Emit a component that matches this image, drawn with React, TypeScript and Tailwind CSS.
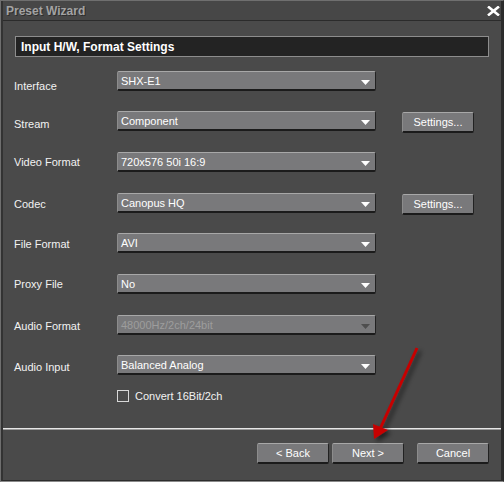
import React from "react";

const font = { fontFamily: '"Liberation Sans", Arial, sans-serif' };

function Caret({ disabled }: { disabled?: boolean }) {
  return (
    <svg width="9" height="5" viewBox="0 0 9 5" className="absolute right-[5px] top-[8px]">
      <polygon points="0,0 9,0 4.5,5" fill={disabled ? "#4e4e4e" : "#ffffff"} />
    </svg>
  );
}

function Dropdown({ value, disabled }: { value: string; disabled?: boolean }) {
  return (
    <div
      className={`relative flex h-[20px] w-[259px] items-center rounded-[2px] border-t border-l border-r border-b-2 border-t-[#a8a8a8] border-l-[#8c8c8c] border-r-[#222] border-b-[#1b1b1b] bg-[#79797b] pl-[3px] text-[11px] leading-none ${
        disabled ? "text-[#9d9d9d]" : "text-white"
      }`}
    >
      <span className="pt-[1px]">{value}</span>
      <Caret disabled={disabled} />
    </div>
  );
}

function Btn({ label }: { label: string }) {
  return (
    <div className="flex h-[21px] w-[72px] items-center justify-center rounded-[2px] border-t border-l border-r border-b-2 border-t-[#a8a8a8] border-l-[#8c8c8c] border-r-[#222] border-b-[#1b1b1b] bg-[#79797b] text-[11px] leading-none text-white">
      {label}
    </div>
  );
}

function Row({
  label,
  value,
  disabled,
  settings,
  mt,
  labelShift,
}: {
  label: string;
  value: string;
  disabled?: boolean;
  settings?: boolean;
  mt: string;
  labelShift?: string;
}) {
  return (
    <div className={`flex h-[20px] items-start ${mt}`}>
      <div className={`flex h-[20px] w-[103px] items-center text-[11px] text-[#f2f2f2] ${labelShift ?? ""}`}>
        {label}
      </div>
      <Dropdown value={value} disabled={disabled} />
      {settings && (
        <div className="ml-[26px] pt-[1px]">
          <Btn label="Settings..." />
        </div>
      )}
    </div>
  );
}

export default function App() {
  return (
    <div
      style={font}
      className="relative h-[482px] w-[504px] overflow-hidden border border-t-[#6f6f6f] border-l-[#6f6f6f] border-r-[#2a2a2a] border-b-[#8a8a8a] bg-[#4a4a4a]"
    >
      <div className="flex h-full flex-col border-l-2 border-r-2 border-b border-l-[#333] border-r-[#2c2c2c] border-b-[#2c2c2c]">
        {/* Title bar */}
        <div className="flex h-[20px] shrink-0 items-center justify-between border-b border-b-[#2b2b2b] bg-[#474747] pl-[3px] pr-[1px]">
          <span className="text-[12px] font-bold text-[#a3a3a3] [text-shadow:1px_1px_0_#2e2e2e]">Preset Wizard</span>
          <svg width="13" height="10" viewBox="0 0 13 10" className="mt-[1px]">
            <path d="M1 0.5 L12 9.5 M12 0.5 L1 9.5" stroke="#ffffff" strokeWidth="2.6" />
          </svg>
        </div>

        {/* Content */}
        <div className="flex flex-1 flex-col pl-[11px]">
          <div className="ml-[1px] mt-[15px] flex h-[21px] w-[474px] items-center border border-[#8d8d8d] bg-[#232323] pl-[5px] text-[12px] font-bold text-white">
            Input H/W, Format Settings
          </div>

          <Row mt="mt-[14px]" label="Interface" value="SHX-E1" labelShift="translate-y-[5px]" />
          <Row mt="mt-[20px]" label="Stream" value="Component" settings labelShift="translate-y-[3px]" />
          <Row mt="mt-[21px]" label="Video Format" value="720x576 50i 16:9" />
          <Row mt="mt-[21px]" label="Codec" value="Canopus HQ" settings labelShift="translate-y-[1px]" />
          <Row mt="mt-[20px]" label="File Format" value="AVI" labelShift="translate-y-[1px]" />
          <Row mt="mt-[21px]" label="Proxy File" value="No" />
          <Row mt="mt-[21px]" label="Audio Format" value="48000Hz/2ch/24bit" disabled labelShift="translate-y-[1px]" />
          <Row mt="mt-[20px]" label="Audio Input" value="Balanced Analog" labelShift="translate-y-[2px]" />

          <div className="mt-[13px] flex items-center pl-[103px]">
            <div className="h-[12px] w-[12px] border border-[#d8d8d8]" />
            <span className="ml-[6px] text-[11px] text-[#f2f2f2]">Convert 16Bit/2ch</span>
          </div>
        </div>

        {/* Footer */}
        <div className="shrink-0">
          <div className="h-[2px] border-t border-t-[#e6e6e6] border-b border-b-[#9a9a9a]" />
          <div className="flex h-[50px] items-start justify-end pr-[12px] pt-[13px]">
            <Btn label="< Back" />
            <div className="ml-[3px]">
              <Btn label="Next >" />
            </div>
            <div className="ml-[13px]">
              <Btn label="Cancel" />
            </div>
          </div>
        </div>
      </div>

      {/* Red annotation arrow */}
      <svg
        className="pointer-events-none absolute left-0 top-0"
        width="504"
        height="482"
        viewBox="0 0 504 482"
      >
        <defs>
          <filter id="sh" x="-50%" y="-50%" width="200%" height="200%">
            <feDropShadow dx="3" dy="3" stdDeviation="2.5" floodColor="#000" floodOpacity="0.6" />
          </filter>
        </defs>
        <g filter="url(#sh)">
          <line x1="416" y1="347" x2="379" y2="428" stroke="#c60000" strokeWidth="3" />
          <polygon points="373,438 372,423 387,429" fill="#c60000" />
        </g>
      </svg>
    </div>
  );
}
